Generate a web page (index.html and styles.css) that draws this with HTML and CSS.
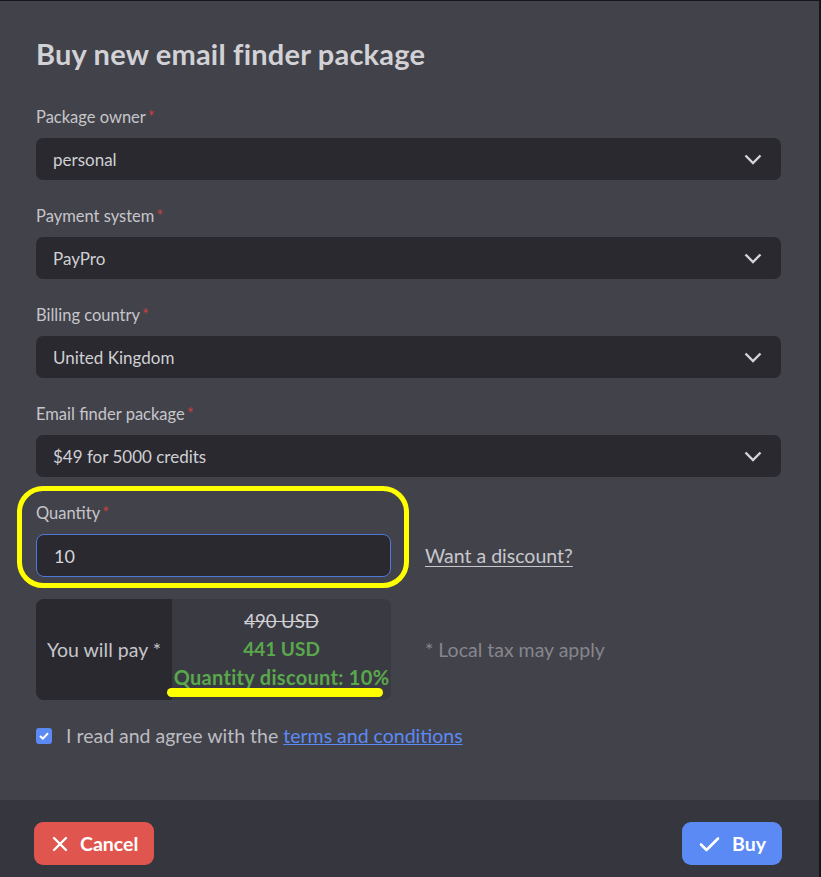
FILE: index.html
```html
<!doctype html>
<html lang="en">
<head>
    <meta charset="utf-8">
    <title>Buy new email finder package</title>
    <link rel="stylesheet" href="styles.css">
</head>
<body>
    <div class="dialog">
        <div class="content">
            <h1>Buy new email finder package</h1>

            <div class="field">
                <label>Package owner<span class="req">*</span></label>
                <div class="select">personal
                    <svg class="chev" width="18" height="11" viewBox="0 0 18 11"><path d="M1.5 1.5 L9 9 L16.5 1.5" fill="none" stroke="#d4d4d8" stroke-width="2.4"/></svg>
                </div>
            </div>

            <div class="field">
                <label>Payment system<span class="req">*</span></label>
                <div class="select">PayPro
                    <svg class="chev" width="18" height="11" viewBox="0 0 18 11"><path d="M1.5 1.5 L9 9 L16.5 1.5" fill="none" stroke="#d4d4d8" stroke-width="2.4"/></svg>
                </div>
            </div>

            <div class="field">
                <label>Billing country<span class="req">*</span></label>
                <div class="select">United Kingdom
                    <svg class="chev" width="18" height="11" viewBox="0 0 18 11"><path d="M1.5 1.5 L9 9 L16.5 1.5" fill="none" stroke="#d4d4d8" stroke-width="2.4"/></svg>
                </div>
            </div>

            <div class="field">
                <label>Email finder package<span class="req">*</span></label>
                <div class="select">$49 for 5000 credits
                    <svg class="chev" width="18" height="11" viewBox="0 0 18 11"><path d="M1.5 1.5 L9 9 L16.5 1.5" fill="none" stroke="#d4d4d8" stroke-width="2.4"/></svg>
                </div>
            </div>

            <div class="qty-field">
                <div class="ring"></div>
                <label>Quantity<span class="req">*</span></label>
                <div class="row">
                    <div class="input">10</div>
                    <a class="discount" href="#">Want a discount?</a>
                </div>
            </div>

            <div class="row pay-row">
                <div class="pay">
                    <div class="pay-label">You will pay *</div>
                    <div class="pay-values">
                        <div class="old">490 USD</div>
                        <div class="new">441 USD</div>
                        <div class="new small">Quantity discount: 10%</div>
                        <div class="mark"></div>
                    </div>
                </div>
                <div class="tax">* Local tax may apply</div>
            </div>

            <div class="agree">
                <span class="checkbox">
                    <svg width="10" height="8" viewBox="0 0 10 8"><path d="M1 4 L3.8 6.6 L9 1.2" fill="none" stroke="#fff" stroke-width="2"/></svg>
                </span>
                <span>I read and agree with the <a href="#">terms and conditions</a></span>
            </div>
        </div>

        <div class="footer">
            <button class="btn cancel">
                <svg width="16" height="16" viewBox="0 0 16 16"><path d="M2 2 L14 14 M14 2 L2 14" stroke="#fff" stroke-width="2.4" stroke-linecap="round"/></svg>
                Cancel
            </button>
            <button class="btn buy">
                <svg width="21" height="16" viewBox="0 0 21 16"><path d="M2 8.5 L7.5 14 L19 2.5" fill="none" stroke="#fff" stroke-width="2.6" stroke-linecap="round" stroke-linejoin="round"/></svg>
                Buy
            </button>
        </div>
    </div>
</body>
</html>
```

FILE: styles.css
```css
body {
    margin: 0;
    background: #15151a;
    font-family: Lato, "Open Sans", sans-serif;
}

.dialog {
    width: 819px;
    margin-top: 1px;
    background: #42424b;
}

.content {
    padding: 37px 38px 0 36px;
    height: 799px;
    box-sizing: border-box;
}

h1 {
    margin: 0 0 37px;
    font-size: 29px;
    line-height: 32px;
    font-weight: bold;
    color: #d2d2d6;
    letter-spacing: 0.2px;
}

label {
    display: block;
    font-size: 16.5px;
    line-height: 20px;
    color: #c6c6ca;
    margin-bottom: 11px;
}

.req {
    color: #c8403c;
    margin-left: 2px;
}

.field {
    margin-bottom: 26px;
}

.select {
    display: flex;
    align-items: center;
    justify-content: space-between;
    height: 42px;
    padding: 0 19px 0 17px;
    border-radius: 7px;
    background: #29292f;
    color: #d0d0d4;
    font-size: 17px;
}

.qty-field {
    position: relative;
}

.ring {
    position: absolute;
    left: -19px;
    top: -17px;
    width: 382px;
    height: 92px;
    border: 5px solid #ffff00;
    border-radius: 26px;
}

.row {
    display: flex;
    align-items: center;
    gap: 34px;
}

.input {
    width: 355px;
    height: 43px;
    box-sizing: border-box;
    display: flex;
    align-items: center;
    padding-left: 17px;
    border: 1px solid #4f78d8;
    border-radius: 8px;
    background: #29292f;
    color: #d6d6da;
    font-size: 18px;
}

.discount {
    color: #c8c8cc;
    font-size: 19.5px;
    text-decoration: underline;
    text-underline-offset: 3px;
}

.pay-row {
    margin-top: 22px;
}

.pay {
    width: 355px;
    height: 101px;
    display: flex;
    border-radius: 8px;
    overflow: hidden;
    background: #3a3a42;
}

.pay-label {
    width: 136px;
    display: flex;
    align-items: center;
    justify-content: center;
    background: #29292f;
    color: #c6c6ca;
    font-size: 19.5px;
}

.pay-values {
    position: relative;
    flex: 1;
    display: flex;
    flex-direction: column;
    align-items: center;
    justify-content: center;
    padding-bottom: 2px;
    font-size: 18.5px;
    line-height: 28px;
}

.old {
    color: #cfcfd3;
    text-decoration: line-through;
}

.new {
    color: #5aa84c;
    font-weight: bold;
    font-size: 19px;
}

.new.small {
    font-size: 20px;
    letter-spacing: 0.3px;
}

.mark {
    position: absolute;
    left: -5px;
    right: 8px;
    bottom: 3px;
    height: 9px;
    border-radius: 5px;
    background: #ffff00;
}

.tax {
    color: #86868c;
    font-size: 19.5px;
}

.agree {
    display: flex;
    align-items: center;
    gap: 14px;
    margin-top: 24px;
    color: #bdbdc1;
    font-size: 19.5px;
}

.agree a {
    color: #5b8af5;
    text-decoration: underline;
}

.checkbox {
    width: 16px;
    height: 16px;
    border-radius: 3px;
    background: #5b8af5;
    display: flex;
    align-items: center;
    justify-content: center;
}

.footer {
    display: flex;
    justify-content: space-between;
    padding: 22px 37px 12px 34px;
    background: #36363f;
    height: 77px;
    box-sizing: border-box;
}

.btn {
    height: 43px;
    display: flex;
    align-items: center;
    gap: 12px;
    border: none;
    border-radius: 9px;
    color: #fff;
    font-family: Lato, sans-serif;
    font-size: 19.5px;
    font-weight: bold;
}

.cancel {
    width: 120px;
    padding-left: 18px;
    background: #e0564f;
}

.buy {
    width: 100px;
    padding-left: 17px;
    gap: 12px;
    background: #5b8af5;
}
```
